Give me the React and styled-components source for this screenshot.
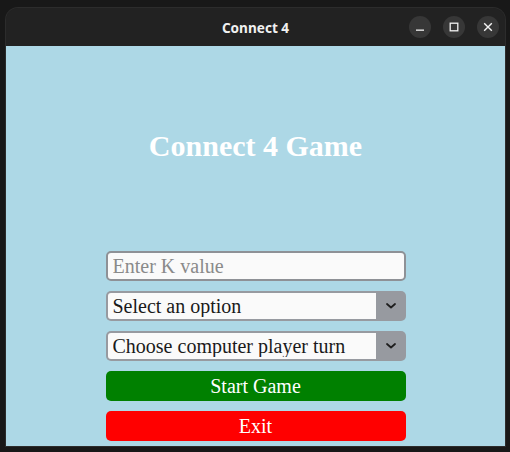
import React from "react";
import styled, { createGlobalStyle } from "styled-components";

const Global = createGlobalStyle`
  html, body { margin: 0; padding: 0; background: #181818; }
  body { width: 510px; height: 452px; overflow: hidden; }
  * { box-sizing: border-box; }
`;

const Desktop = styled.div`
  width: 510px;
  height: 452px;
  padding: 8px 5px 6px 6px;
  background: #181818;
`;

const Window = styled.div`
  width: 499px;
  height: 438px;
  display: flex;
  flex-direction: column;
  border-radius: 12px 12px 0 0;
  overflow: hidden;
  background: #222222;
  box-shadow: 0 0 0 1px #2c2c2c;
`;

const TitleBar = styled.div`
  height: 38px;
  flex: none;
  display: grid;
  grid-template-columns: 1fr auto 1fr;
  align-items: center;
  background: #222222;
  padding: 0 6px;
`;

const Title = styled.div`
  grid-column: 2;
  color: #f0f0f0;
  font-family: "Noto Sans", "DejaVu Sans", sans-serif;
  font-weight: 700;
  font-size: 13.6px;
`;

const Controls = styled.div`
  grid-column: 3;
  justify-self: end;
  display: flex;
  gap: 12px;
`;

const CtrlButton = styled.div`
  width: 22px;
  height: 22px;
  border-radius: 50%;
  background: #373737;
  display: flex;
  align-items: center;
  justify-content: center;
  color: #f2f2f2;
`;

const Content = styled.div`
  flex: 1;
  background: #add8e6;
  display: flex;
  flex-direction: column;
  align-items: center;
  padding-top: 82px;
`;

const Heading = styled.h1`
  margin: 0;
  height: 36px;
  line-height: 36px;
  color: #ffffff;
  font-family: "Liberation Serif", serif;
  font-weight: 700;
  font-size: 30px;
`;

const Form = styled.div`
  margin-top: 87px;
  width: 300px;
  display: flex;
  flex-direction: column;
  gap: 10px;
`;

const TextInput = styled.input`
  width: 300px;
  height: 30px;
  border: 2px solid #8e9196;
  border-radius: 5px;
  background: #fafafa;
  padding: 0 5px;
  font-family: "Liberation Serif", serif;
  font-size: 20px;
  color: #1a1a1a;
  outline: none;
  &::placeholder { color: #8a8a8a; }
`;

const SelectWrap = styled.div`
  width: 300px;
  height: 30px;
  display: flex;
  border-radius: 5px;
  background: #979aa0;
  padding: 2px 0 2px 2px;
`;

const Select = styled.select`
  flex: 1;
  min-width: 0;
  appearance: none;
  -webkit-appearance: none;
  border: none;
  border-radius: 3px 0 0 3px;
  background: #fafafa;
  padding: 0 5px;
  font-family: "Liberation Serif", serif;
  font-size: 20px;
  color: #1a1a1a;
  outline: none;
`;

const Arrow = styled.div`
  width: 30px;
  flex: none;
  display: flex;
  align-items: center;
  justify-content: center;
  color: #1e1e1e;
`;

const ActionButton = styled.button`
  width: 300px;
  height: 30px;
  border: none;
  border-radius: 5px;
  background: ${(p) => p.$bg};
  color: #ffffff;
  font-family: "Liberation Serif", serif;
  font-size: 20px;
  padding: 0;
  cursor: pointer;
`;

const Chevron = () => (
  <svg width="10" height="6" viewBox="0 0 10 6" fill="none">
    <path d="M1 1l4 3.5L9 1" stroke="currentColor" strokeWidth="1.8" strokeLinecap="round" strokeLinejoin="round" />
  </svg>
);

export default function App() {
  return (
    <>
      <Global />
      <Desktop>
        <Window>
          <TitleBar>
            <Title>Connect 4</Title>
            <Controls>
              <CtrlButton>
                <svg width="10" height="10" viewBox="0 0 10 10">
                  <rect x="1" y="7.5" width="8" height="1.3" fill="currentColor" />
                </svg>
              </CtrlButton>
              <CtrlButton>
                <svg width="10" height="10" viewBox="0 0 10 10">
                  <rect x="1.2" y="1.2" width="7.6" height="7.6" fill="none" stroke="currentColor" strokeWidth="1.3" />
                </svg>
              </CtrlButton>
              <CtrlButton>
                <svg width="10" height="10" viewBox="0 0 10 10">
                  <path d="M1.2 1.2l7.6 7.6M8.8 1.2l-7.6 7.6" stroke="currentColor" strokeWidth="1.4" />
                </svg>
              </CtrlButton>
            </Controls>
          </TitleBar>
          <Content>
            <Heading>Connect 4 Game</Heading>
            <Form>
              <TextInput placeholder="Enter K value" />
              <SelectWrap>
                <Select defaultValue="">
                  <option value="">Select an option</option>
                </Select>
                <Arrow><Chevron /></Arrow>
              </SelectWrap>
              <SelectWrap>
                <Select defaultValue="">
                  <option value="">Choose computer player turn</option>
                </Select>
                <Arrow><Chevron /></Arrow>
              </SelectWrap>
              <ActionButton $bg="#008000">Start Game</ActionButton>
              <ActionButton $bg="#ff0000">Exit</ActionButton>
            </Form>
          </Content>
        </Window>
      </Desktop>
    </>
  );
}
